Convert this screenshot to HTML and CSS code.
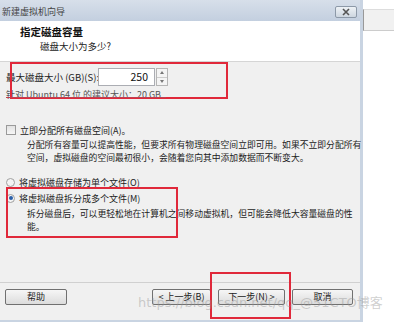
FILE: index.html
```html
<!DOCTYPE html>
<html>
<head>
<meta charset="utf-8">
<link rel="stylesheet" href="styles.css">
</head>
<body>
<div class="screen">
  <div class="side"><div class="side-strip"></div></div>
  <div class="window">
    <div class="titlebar">
      <span class="title">新建虚拟机向导</span>
      <span class="close"><svg width="12" height="8" viewBox="0 0 12 8"><path d="M3 1 L9 7 M9 1 L3 7" stroke="#555" stroke-width="1.6"/></svg></span>
    </div>
    <div class="header">
      <div class="h-title">指定磁盘容量</div>
      <div class="h-sub">磁盘大小为多少?</div>
    </div>
    <div class="content">
      <div class="size-row">
        <span class="size-label">最大磁盘大小 (GB)(S):</span>
        <div class="input">250</div>
        <div class="spin"><span class="up"></span><span class="down"></span></div>
      </div>
      <div class="hint">针对 Ubuntu 64 位 的建议大小：20 GB</div>
      <div class="check-row"><span class="checkbox"></span>立即分配所有磁盘空间(A)。</div>
      <div class="desc">分配所有容量可以提高性能，但要求所有物理磁盘空间立即可用。如果不立即分配所有<br>空间，虚拟磁盘的空间最初很小，会随着您向其中添加数据而不断变大。</div>
      <div class="radio-row r1"><span class="radio"></span>将虚拟磁盘存储为单个文件(O)</div>
      <div class="radio-row r2"><span class="radio on"></span>将虚拟磁盘拆分成多个文件(M)</div>
      <div class="desc desc2">拆分磁盘后，可以更轻松地在计算机之间移动虚拟机，但可能会降低大容量磁盘的性<br>能。</div>
    </div>
    <div class="footer">
      <button class="btn">帮助</button>
      <div class="spacer"></div>
      <button class="btn btn-back">&lt; 上一步(B)</button>
      <button class="btn btn-next">下一步(N) &gt;</button>
      <button class="btn btn-cancel">取消</button>
    </div>
  </div>
  <div class="mark m1"></div>
  <div class="mark m2"></div>
  <div class="mark m3"></div>
  <div class="strike"></div>
  <div class="watermark">https://blog.csdn.net/qq_@51CTO博客</div>
</div>
</body>
</html>
```
FILE: styles.css
```css
* { box-sizing: border-box; }
html, body { margin: 0; padding: 0; }
body {
  width: 394px; height: 324px; overflow: hidden; background: #fff;
  font-family: "Noto Sans CJK SC", "DejaVu Sans", sans-serif;
  font-size: 9px; color: #222;
}
.screen { position: relative; width: 394px; height: 324px; display: flex; flex-direction: row-reverse; justify-content: flex-end; }
.side { width: 31px; background: #fff; }
.side-strip { height: 22px; margin-top: 9px; background: #f1f1f1; border-top: 1px solid #ddd; border-bottom: 1px solid #ccc; border-left: 1px solid #999; }
.window {
  width: 363px; height: 322px; display: flex; flex-direction: column;
  background: #f0f0f0; border-right: 3px solid #c9d4e2; border-bottom: 2px solid #c9d4e2;
}
.titlebar {
  height: 21px; flex: none; display: flex; align-items: center; justify-content: space-between;
  background: linear-gradient(#d7dfea, #c3cfdf); padding: 0 3px 0 2px;
}
.title { font-size: 9px; color: #444; margin-top: 2px; }
.close {
  width: 22px; height: 12px; margin-top: 3px; border: 1px solid #8d99a8; border-radius: 2px;
  background: linear-gradient(#eef2f6, #cdd6e0); display: flex; align-items: center; justify-content: center;
}
.header { height: 41px; flex: none; background: #fff; padding: 4px 0 0 20px; border-bottom: 1px solid #d5d5d5; }
.h-title { font-weight: bold; font-size: 10.5px; line-height: 14px; color: #111; }
.h-sub { padding-left: 20px; line-height: 14px; color: #222; font-size: 9.5px; }
.content { flex: 1; padding: 6px 0 0 6px; white-space: nowrap; }
.size-row { display: flex; align-items: center; height: 18px; }
.size-label { width: 92px; font-size: 9.5px; }
.input {
  width: 57px; height: 18px; background: #fff; border: 1px solid #abadb3; text-align: right;
  padding-right: 6px; font-size: 10.5px; line-height: 16px; color: #111;
}
.spin { width: 12px; height: 18px; margin-left: 1px; display: flex; flex-direction: column; border: 1px solid #b5b5b5; background: #f4f4f4; }
.spin span { flex: 1; position: relative; }
.spin .up::after, .spin .down::after { content: ""; position: absolute; left: 3px; border-left: 2.5px solid transparent; border-right: 2.5px solid transparent; }
.spin .up::after { top: 2px; border-bottom: 3px solid #777; }
.spin .down { border-top: 1px solid #ccc; }
.spin .down::after { top: 2px; border-top: 3px solid #777; }
.hint { margin-top: 2px; line-height: 14px; color: #555; }
.check-row { margin-top: 21px; display: flex; align-items: center; height: 14px; }
.checkbox { width: 10px; height: 10px; border: 1px solid #9a9a9a; background: linear-gradient(#e2e2e2, #f6f6f6); margin-right: 4px; }
.desc { padding-left: 21px; line-height: 13px; margin-top: 1px; color: #222; font-size: 8.8px; }
.radio-row { display: flex; align-items: center; height: 14px; }
.r1 { margin-top: 11px; }
.r2 { margin-top: 2px; }
.radio { width: 9px; height: 9px; border-radius: 50%; border: 1px solid #a0a0a0; background: #f4f4f4; margin-right: 4px; position: relative; }
.radio.on::after { content: ""; position: absolute; left: 1.5px; top: 1.5px; width: 4px; height: 4px; border-radius: 50%; background: #2a5fa8; }
.desc2 { margin-top: 2px; }
.footer { height: 38px; flex: none; border-top: 1px solid #d0d0d0; display: flex; align-items: flex-start; padding: 6px 7px 0 5px; gap: 7px; }
.spacer { flex: 1; }
.btn {
  height: 16px; width: 62px; border: 1px solid #707070; border-radius: 2px; padding: 0;
  background: linear-gradient(#f6f6f6, #dcdcdc); font-family: inherit; font-size: 9px; line-height: 14px; color: #222;
}
.btn-back { width: 59px; }
.btn-next { width: 67px; }
.btn-cancel { width: 61px; }
.mark { position: absolute; border: 2px solid #e0283a; }
.m1 { left: 10px; top: 62px; width: 218px; height: 37px; }
.m2 { left: 6px; top: 187px; width: 172px; height: 51px; }
.m3 { left: 210px; top: 272px; width: 81px; height: 47px; }
.strike { position: absolute; left: 6px; top: 97px; width: 160px; height: 1px; background: #c04050; }
.watermark { position: absolute; left: 138px; top: 292px; white-space: nowrap; font-family: "DejaVu Sans", "Noto Sans CJK SC", sans-serif; font-size: 13px; color: rgba(150,150,150,0.45); }
```
